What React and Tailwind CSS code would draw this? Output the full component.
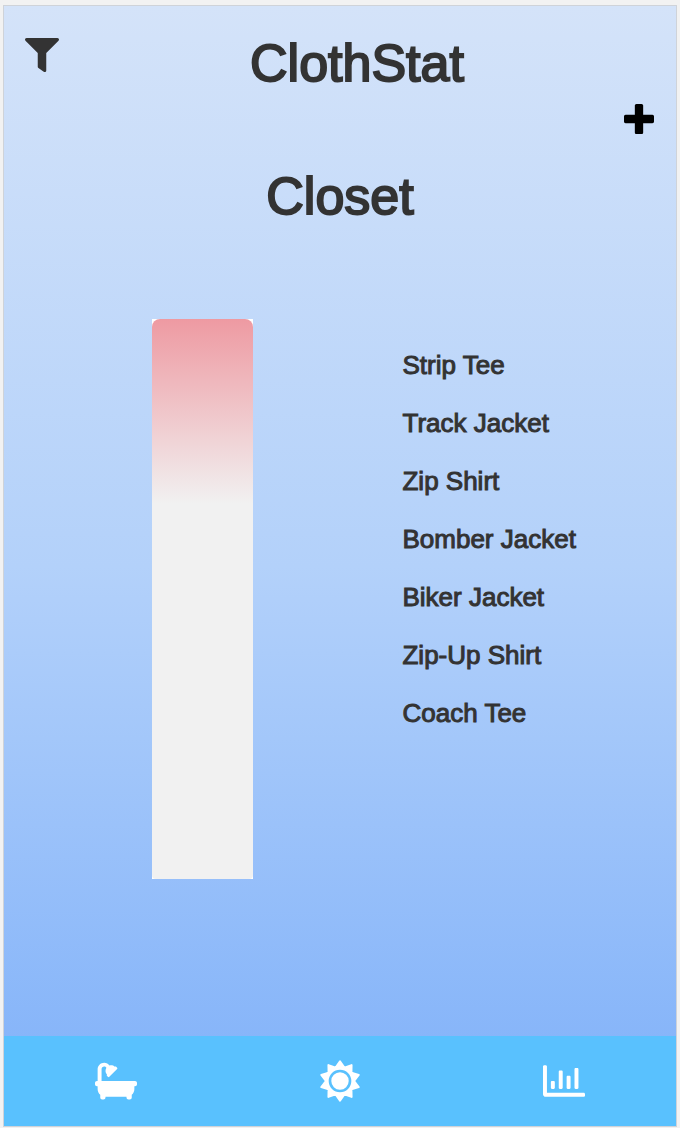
import React from "react";
import { FaFilter, FaRegChartBar } from "react-icons/fa";

const items = [
  "Strip Tee",
  "Track Jacket",
  "Zip Shirt",
  "Bomber Jacket",
  "Biker Jacket",
  "Zip-Up Shirt",
  "Coach Tee",
];

const rays = Array.from({ length: 20 }, (_, i) => {
  const angle = (i * Math.PI) / 10 - Math.PI / 2;
  const radius = i % 2 === 0 ? 240 : 172;
  return `${(256 + radius * Math.cos(angle)).toFixed(1)},${(256 + radius * Math.sin(angle)).toFixed(1)}`;
}).join(" ");

function PlusIcon() {
  return (
    <svg viewBox="0 32 448 448" className="size-[30px]" fill="currentColor" aria-hidden="true">
      <path d="M448 294.2v-76.4c0-13.3-10.7-24-24-24H286.2V56c0-13.3-10.7-24-24-24h-76.4c-13.3 0-24 10.7-24 24v137.8H24c-13.3 0-24 10.7-24 24v76.4c0 13.3 10.7 24 24 24h137.8V456c0 13.3 10.7 24 24 24h76.4c13.3 0 24-10.7 24-24V318.2H424c13.3 0 24-10.7 24-24z" />
    </svg>
  );
}

function BathIcon() {
  return (
    <svg viewBox="0 0 512 512" className="size-[42px]" fill="currentColor" aria-hidden="true">
      <path d="M488 256H80V112c0-17.645 14.355-32 32-32 11.351 0 21.332 5.945 27.015 14.88-16.492 25.207-14.687 59.576 6.838 83.035-4.176 4.713-4.021 11.916.491 16.428l11.314 11.314c4.686 4.686 12.284 4.686 16.971 0l95.03-95.029c4.686-4.686 4.686-12.284 0-16.971l-11.314-11.314c-4.512-4.512-11.715-4.666-16.428-.491-17.949-16.469-42.294-21.429-64.178-15.365C163.281 45.667 139.212 32 112 32c-44.112 0-80 35.888-80 80v144h-8c-13.255 0-24 10.745-24 24v16c0 13.255 10.745 24 24 24h8v32c0 28.43 12.362 53.969 32 71.547V456c0 13.255 10.745 24 24 24h16c13.255 0 24-10.745 24-24v-8h256v8c0 13.255 10.745 24 24 24h16c13.255 0 24-10.745 24-24v-32.453c19.638-17.578 32-43.117 32-71.547v-32h8c13.255 0 24-10.745 24-24v-16c0-13.255-10.745-24-24-24z" />
    </svg>
  );
}

function SunIcon() {
  return (
    <svg viewBox="0 0 512 512" className="size-[42px]" aria-hidden="true">
      <polygon points={rays} fill="currentColor" stroke="currentColor" strokeWidth="24" strokeLinejoin="round" />
      <circle cx="256" cy="256" r="122" fill="none" stroke="#59c1fe" strokeWidth="32" />
    </svg>
  );
}

export default function App() {
  return (
    <div className="min-h-screen bg-[#f2f2f2] pt-[5px] pr-[3px] pb-px pl-[3px] font-['Liberation_Sans',Arial,sans-serif] text-[#333333] flex flex-col">
      <div className="flex grow flex-col border border-[#cfd3d9] bg-linear-to-b from-[#d4e3f9] via-[#b3d1fa] to-[#7fb0f9]">
        <header className="flex items-start justify-between pt-8 pl-[21px] pr-[21px]">
          <button type="button" aria-label="Filter">
            <FaFilter className="size-[34px]" />
          </button>
          <h1 className="text-[52px] leading-[50px] [-webkit-text-stroke:2px]">ClothStat</h1>
          <div className="w-0" />
        </header>
        <div className="flex justify-end pt-4 pr-[22px] text-black">
          <button type="button" aria-label="Add item">
            <PlusIcon />
          </button>
        </div>
        <main className="grow">
          <h2 className="pt-8 text-center text-[52px] leading-[60px] [-webkit-text-stroke:2px]">Closet</h2>
          <div className="mt-[93px] flex">
            <div className="flex w-[59%] justify-center">
              <div className="h-[560px] w-[101px] bg-white">
                <div className="h-full rounded-t-lg rounded-b-sm bg-[linear-gradient(to_bottom,#ee9aa2,#f1f1f1_33%)]" />
              </div>
            </div>
            <ul className="grow pt-[17px] pl-[2px] text-[26px] leading-[58px] [-webkit-text-stroke:1px]">
              {items.map((item) => (
                <li key={item}>{item}</li>
              ))}
            </ul>
          </div>
        </main>
        <nav className="grid h-[90px] grid-cols-3 bg-[#59c1fe] text-white">
          <a href="#closet" aria-label="Laundry" className="flex items-center justify-center">
            <BathIcon />
          </a>
          <a href="#weather" aria-label="Weather" className="flex items-center justify-center">
            <SunIcon />
          </a>
          <a href="#stats" aria-label="Statistics" className="flex items-center justify-center">
            <FaRegChartBar className="size-[42px]" />
          </a>
        </nav>
      </div>
    </div>
  );
}
